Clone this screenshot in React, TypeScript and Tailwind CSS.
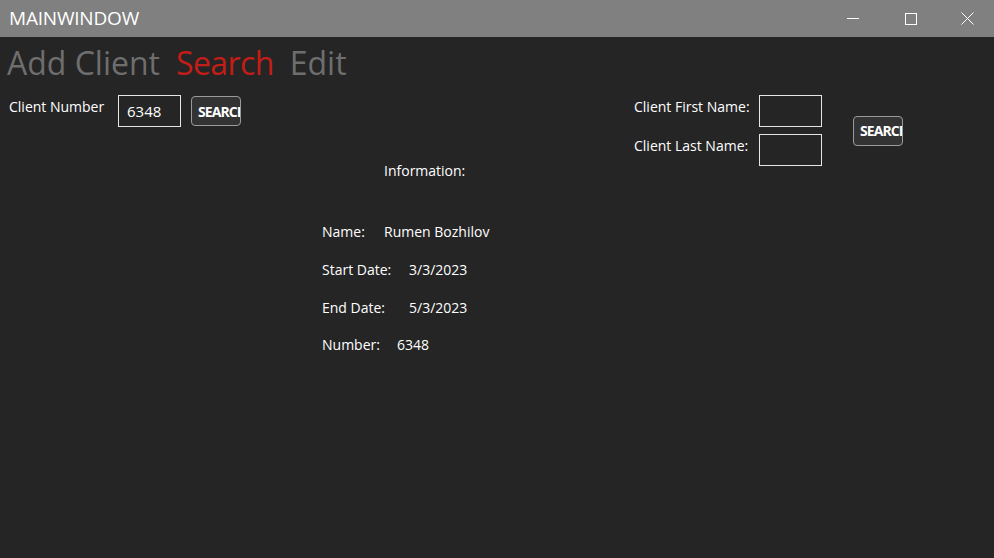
import React from 'react';

const font = { fontFamily: '"Open Sans", "Noto Sans", sans-serif' };

function SearchButton() {
  return (
    <button className="w-[50px] h-[30px] rounded-[4px] border border-[#9a9a9a] bg-[#333333] overflow-hidden flex items-center pl-[6px] text-[14px] font-bold text-white tracking-[-0.9px] whitespace-nowrap">
      SEARCH
    </button>
  );
}

function Field({ value = '' }: { value?: string }) {
  return (
    <div className="w-[63px] h-[32px] border border-[#e6e6e6] bg-[#252525] flex items-center px-[8px] text-[15px] text-white">
      {value}
    </div>
  );
}

function InfoRow({ label, value, gap }: { label: string; value: string; gap: string }) {
  return (
    <div className="flex text-[14px] text-white h-[37.7px] items-center">
      <span className={gap}>{label}</span>
      <span>{value}</span>
    </div>
  );
}

export default function App() {
  return (
    <div className="w-[994px] h-[558px] bg-[#252525] flex flex-col overflow-hidden" style={font}>
      <div className="h-[37px] bg-[#808080] flex items-center justify-between shrink-0">
        <span className="pl-[9px] text-[19px] text-white tracking-[-0.2px]">MAINWINDOW</span>
        <div className="flex items-center h-full">
          <div className="w-[58px] h-full flex items-center justify-center">
            <div className="w-[12px] h-px bg-white" />
          </div>
          <div className="w-[58px] h-full flex items-center justify-center">
            <div className="w-[12px] h-[12px] border border-white" />
          </div>
          <div className="w-[54px] h-full flex items-center justify-center">
            <svg width="13" height="13" viewBox="0 0 13 13" stroke="white" strokeWidth="1">
              <path d="M0.5 0.5 L12.5 12.5 M12.5 0.5 L0.5 12.5" />
            </svg>
          </div>
        </div>
      </div>

      <div className="flex items-center pl-[7px] h-[52px] text-[32px] leading-none">
        <span className="text-[#6e6e6e]">Add Client</span>
        <span className="text-[#c21d17] ml-[16px] tracking-[-0.6px]">Search</span>
        <span className="text-[#6e6e6e] ml-[16px]">Edit</span>
      </div>

      <div className="flex mt-[6px]">
        <div className="flex items-start pl-[9px] w-[625px]">
          <span className="text-[14px] text-white w-[109px] mt-[1px]">Client Number</span>
          <Field value="6348" />
          <div className="ml-[10px] mt-[1px]">
            <SearchButton />
          </div>
        </div>
        <div className="flex items-center ml-[9px]">
          <div className="flex flex-col gap-[7px]">
            <div className="flex items-start h-[32px]">
              <span className="text-[14px] text-white w-[125px] mt-[1px]">Client First Name:</span>
              <Field />
            </div>
            <div className="flex items-start h-[32px]">
              <span className="text-[14px] text-white w-[125px] mt-[1px]">Client Last Name:</span>
              <Field />
            </div>
          </div>
          <div className="ml-[31px]">
            <SearchButton />
          </div>
        </div>
      </div>

      <div className="pl-[384px] mt-[-6px] text-[14px] text-white">Information:</div>

      <div className="pl-[322px] mt-[32px] flex flex-col">
        <InfoRow label="Name:" value="Rumen Bozhilov" gap="w-[62px]" />
        <InfoRow label="Start Date:" value="3/3/2023" gap="w-[87px]" />
        <InfoRow label="End Date:" value="5/3/2023" gap="w-[87px]" />
        <InfoRow label="Number:" value="6348" gap="w-[75px]" />
      </div>
    </div>
  );
}
